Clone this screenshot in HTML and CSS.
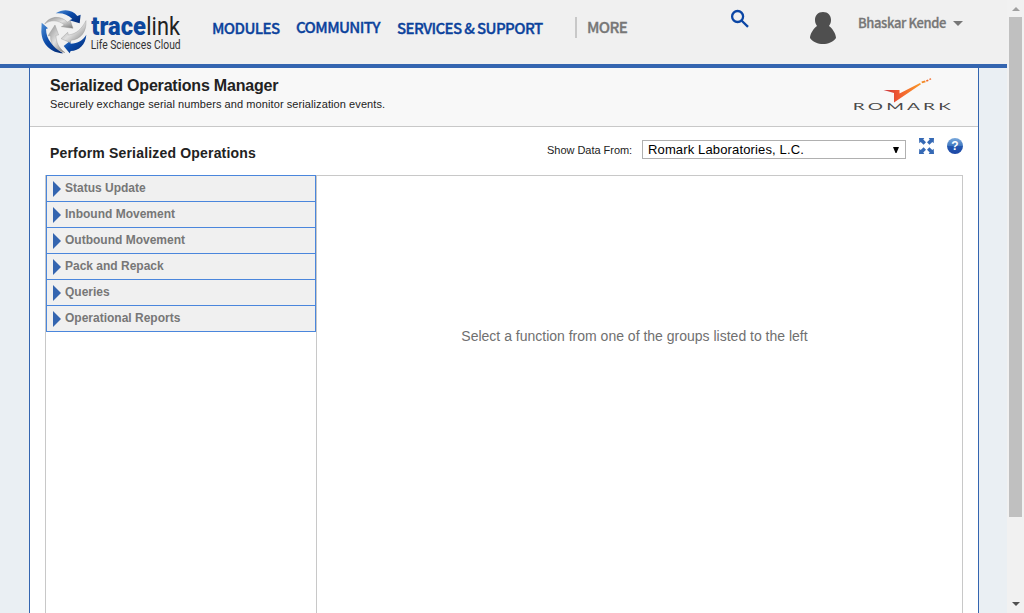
FILE: index.html
```html
<!DOCTYPE html>
<html lang="en">
<head>
<meta charset="utf-8">
<title>Serialized Operations Manager</title>
<link rel="stylesheet" href="styles.css">
</head>
<body>
<div class="screen">
  <div class="page">
    <header class="topbar">
      <svg class="brand" viewBox="0 0 480 192" role="img" aria-label="tracelink Life Sciences Cloud">
        <defs>
          <linearGradient id="blue" x1="0" y1="0" x2="1" y2="1"><stop offset="0" stop-color="#4f8fd6"/><stop offset=".45" stop-color="#0b4aa8"/><stop offset="1" stop-color="#04286f"/></linearGradient>
          <linearGradient id="silver" x1="0" y1="0" x2="1" y2="1"><stop offset="0" stop-color="#8a8a8a"/><stop offset=".5" stop-color="#e0e0e0"/><stop offset="1" stop-color="#777"/></linearGradient>
        </defs>
        <g transform="translate(24 18)">
          <g fill="url(#blue)">
            <path d="M53 22C78 6 104 12 118 30l10-4-3 26-31-9 9-4C90 26 74 20 53 22z"/>
            <path d="M11 50l19 17-6 2c0 32 22 54 52 73C40 141 12 116 10 78z"/>
            <path d="M145 86c-2 30-22 48-47 49l-3 7-18-22 20-16 1 9c22 0 37-11 47-27z"/>
          </g>
          <g fill="url(#silver)" stroke="#888" stroke-width="1">
            <path d="M20 54c16-25 48-26 68-6l9-4 8 23-35-5 9-5C62 42 38 40 20 54z"/>
            <path d="M51 57l11 30-8 1c0 20 8 38 27 52-30-8-45-26-43-50l-8-1z"/>
            <path d="M144 44c2 34-16 56-45 59l-2 7-28-12 20-19 2 8c24-3 40-18 53-43z"/>
          </g>
        </g>
        <text class="brand-bold" x="184" y="104" textLength="164" lengthAdjust="spacingAndGlyphs">trace</text>
        <text class="brand-thin" x="349" y="104" textLength="101" lengthAdjust="spacingAndGlyphs">link</text>
        <text class="brand-sub" x="182" y="147" textLength="270" lengthAdjust="spacingAndGlyphs">Life Sciences Cloud</text>
      </svg>
      <nav class="nav">
        <a class="nav-modules">MODULES</a>
        <a class="nav-community">COMMUNITY</a>
        <a class="nav-services">SERVICES &amp; SUPPORT</a>
        <a class="nav-more">MORE</a>
      </nav>
      <svg class="search" viewBox="0 0 20 20"><circle cx="7.6" cy="7.500" r="5.500"/><path d="M11.500 11.500l6.500 6.300"/></svg>
      <svg class="avatar" viewBox="0 0 26 33"><path d="M13 0c5 0 8 3.500 8 8 0 3-1 4.500-2 6 3.500 2.500 7 8 7 12-3 4-8 6-13 6s-10-2-13-6c0-4 3.500-9.500 7-12-1-1.500-2-3-2-6 0-4.500 3-8 8-8z"/></svg>
      <span class="user">Bhaskar Kende</span>
      <svg class="caret" viewBox="0 0 10 5"><path d="M0 0h10L5 5z"/></svg>
    </header>
    <main class="app">
      <section class="app-head">
        <div>
          <h1>Serialized Operations Manager</h1>
          <p class="tagline">Securely exchange serial numbers and monitor serialization events.</p>
        </div>
        <svg class="romark" viewBox="0 0 98 36" role="img" aria-label="ROMARK">
          <defs><linearGradient id="flame"><stop offset="0" stop-color="#c8353d"/><stop offset=".4" stop-color="#f15a31"/><stop offset="1" stop-color="#f99a28"/></linearGradient></defs>
          <path fill="url(#flame)" d="M29.500 12l16 0v3.500L66 5l1 1.200L40 24.500V15z"/>
          <path fill="#f38a25" d="M67.500 3.500l3.500-1 .7 1.700-3.700 1z"/><path fill="#f06a2a" d="M72 2.200l2-.8.600 1.500-2 .8zM75.200.8l1.700-.6.400 1.200-1.700.6z"/>
          <text class="romark-text" transform="scale(2 1)" x="-.6" y="32.300" textLength="49">ROMARK</text>
        </svg>
      </section>
      <section class="toolbar">
        <h2>Perform Serialized Operations</h2>
        <label class="source-label">Show Data From:</label>
        <div class="select"><span>Romark Laboratories, L.C.</span><svg class="select-arrow" viewBox="0 0 6 6"><path d="M0 0h6L3.500 6h-1z"/></svg></div>
        <svg class="expand" viewBox="0 0 15 16"><g id="arrow"><path d="M0 0h5.300L4.300 1.500l2.700 2.800L4.600 6.700 1.700 3.900.3 5.300z"/></g><use href="#arrow" transform="matrix(-1 0 0 1 15 0)"/><use href="#arrow" transform="matrix(1 0 0 -1 0 16)"/><use href="#arrow" transform="matrix(-1 0 0 -1 15 16)"/></svg>
        <svg class="help" viewBox="0 0 16 16"><defs><linearGradient id="ball" x2="0" y2="1"><stop offset="0" stop-color="#7aa9dc"/><stop offset=".48" stop-color="#4279c0"/><stop offset=".52" stop-color="#2458b0"/><stop offset="1" stop-color="#1c46a5"/></linearGradient></defs><circle cx="8" cy="8" r="8" fill="url(#ball)"/><text class="help-mark" x="8" y="12.300" text-anchor="middle">?</text></svg>
      </section>
      <section class="workspace">
        <aside class="side">
          <ul class="groups">
            <li>Status Update</li>
            <li>Inbound Movement</li>
            <li>Outbound Movement</li>
            <li>Pack and Repack</li>
            <li>Queries</li>
            <li>Operational Reports</li>
          </ul>
        </aside>
        <div class="content"><p class="hint">Select a function from one of the groups listed to the left</p></div>
      </section>
    </main>
  </div>
  <div class="scrollbar">
    <svg class="scroll-up" viewBox="0 0 8 4"><path d="M4 0l4 4H0z"/></svg>
    <div class="thumb"></div>
    <svg class="scroll-down" viewBox="0 0 8 4"><path d="M0 0h8L4 4z"/></svg>
  </div>
</div>
</body>
</html>
```

FILE: styles.css
```css
* { box-sizing: border-box; }
body { margin: 0; font-family: "Liberation Sans", Arial, sans-serif; color: #222; overflow: hidden; }
h1, h2, p, ul { margin: 0; padding: 0; }
svg { display: block; flex: none; }
.screen { display: flex; width: 1024px; height: 613px; }
.page { width: 1007px; display: flex; flex-direction: column; background: #eaeff3; }

.topbar { height: 68px; flex: none; display: flex; align-items: flex-start; background: #f0f0f0; border-bottom: 4px solid #3465b0; white-space: nowrap; }
.brand { width: 160px; height: 64px; margin-left: 30px; overflow: visible; }
.brand text { font-family: Roboto, sans-serif; }
.brand .brand-bold { font-size: 79px; font-weight: 900; fill: #0d479d; }
.brand .brand-thin { font-size: 79px; font-weight: 400; fill: #222; }
.brand .brand-sub { font-size: 36px; fill: #333; }
.nav { display: flex; width: 540px; padding-left: 22px; font: 500 15px/24px "Noto Sans CJK SC", sans-serif; letter-spacing: -.6px; color: #0b429c; -webkit-text-stroke: .35px currentColor; }
.nav-modules { width: 84px; padding-top: 16px; }
.nav-community { width: 101px; padding-top: 15px; }
.nav-services { width: 178px; padding-top: 16px; }
.nav-more { height: 21px; margin-top: 17px; padding-left: 10px; border-left: 2px solid #c8c8c8; line-height: 19px; color: #777; }
.search { width: 20px; height: 20px; margin-top: 9px; fill: none; stroke: #0b46a5; stroke-width: 2.3; }
.avatar { width: 26px; height: 33px; margin: 12px 0 0 60px; fill: #4f4f4f; }
.user { width: 95px; margin: 13px 0 0 22px; font: 500 13px/20px "Noto Sans CJK SC", sans-serif; letter-spacing: -.38px; color: #777; -webkit-text-stroke: .3px currentColor; }
.caret { width: 10px; height: 5px; margin-top: 21px; fill: #777; }

.app { flex: 1; display: flex; flex-direction: column; width: 950px; margin-left: 29px; border: solid #3465b0; border-width: 0 1px; background: #fff; }
.app-head { height: 59px; flex: none; display: flex; justify-content: space-between; padding: 8px 26px 0 20px; background: #f8f8f8; border-bottom: 1px solid #c8c8c8; }
h1 { font-size: 16px; line-height: 20px; letter-spacing: -.19px; }
.tagline { font-size: 11px; line-height: 16px; letter-spacing: .085px; }
.romark { width: 98px; height: 36px; margin-top: 2px; overflow: visible; }
.romark-text { font: 400 9.5px Lato, sans-serif; fill: #4a4a4a; }

.toolbar { height: 48px; flex: none; display: flex; align-items: flex-start; padding-left: 20px; white-space: nowrap; }
h2 { width: 497px; padding-top: 17px; font-size: 14px; line-height: 18px; letter-spacing: .18px; }
.source-label { width: 95px; padding-top: 16px; font-size: 11px; line-height: 15px; letter-spacing: -.03px; }
.select { display: flex; justify-content: space-between; align-items: center; width: 264px; height: 19px; margin-top: 13px; padding: 0 6px 0 5px; border: 1px solid #b0b0b0; font-size: 13px; letter-spacing: .14px; color: #000; }
.select-arrow { width: 6px; height: 6px; }
.expand { width: 15px; height: 16px; margin: 11px 0 0 13px; fill: #3569b5; }
.help { width: 16px; height: 16px; margin: 11px 0 0 13px; }
.help-mark { font: bold 12px "Liberation Sans", sans-serif; fill: #fff; }

.workspace { flex: 1; display: flex; width: 918px; margin-left: 15px; border: 1px solid #c8c8c8; border-bottom: 0; }
.side { width: 271px; border-right: 1px solid #c8c8c8; }
.groups { width: 270px; margin-top: -1px; list-style: none; border: 1px solid #4a86dc; font-size: 12px; font-weight: bold; line-height: 24px; color: #777; background: #f0f0f0; }
.groups li { display: flex; height: 26px; padding-left: 6px; border-bottom: 1px solid #4a86dc; }
.groups li:last-child { height: 25px; border-bottom: 0; }
.groups li::before { content: ""; margin: 5px 4px 0 0; height: 0; border: solid transparent; border-width: 8px 0 8px 8px; border-left-color: #3465b0; }
.content { flex: 1; padding-top: 151px; text-align: center; }
.hint { padding-right: 10px; font-size: 14px; line-height: 18px; color: #707070; }

.scrollbar { width: 17px; display: flex; flex-direction: column; align-items: center; background: #f1f1f1; }
.scroll-up { width: 8px; height: 4px; margin-top: 7px; fill: #a0a0a0; }
.thumb { width: 13px; height: 500px; margin-top: 6px; background: #c0c0c0; }
.scroll-down { width: 8px; height: 4px; margin-top: 85px; fill: #505050; }
```
